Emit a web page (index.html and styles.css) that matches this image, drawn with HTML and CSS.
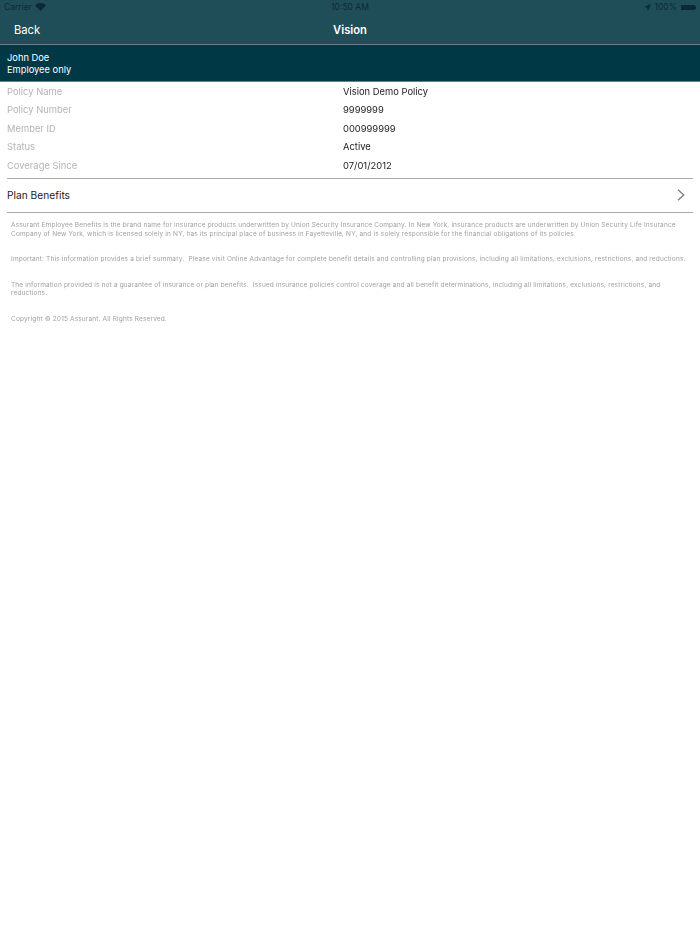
FILE: index.html
```html
<!DOCTYPE html>
<html lang="en">
<head>
    <meta charset="UTF-8">
    <meta name="viewport" content="width=device-width, initial-scale=1.0">
    <title>Vision</title>
    <link rel="stylesheet" href="styles.css">
</head>
<body>
    <div class="top-bar">
        <div class="status-bar">
            <div class="status-left">
                <span>Carrier</span>
                <svg class="wifi" width="11" height="8" viewBox="0 0 11 8"><path d="M5.5 8 L0 2.4 C3 -0.7 8 -0.7 11 2.4 Z" fill="#0c2a33"/></svg>
            </div>
            <div class="status-time">10:50 AM</div>
            <div class="status-right">
                <svg class="arrow" width="7" height="7" viewBox="0 0 7 7"><path d="M7 0 L0 3 L3.2 3.8 L4 7 Z" fill="#0c2a33"/></svg>
                <span>100%</span>
                <span class="battery"></span>
                <span class="battery-tip"></span>
            </div>
        </div>
        <div class="nav-bar">
            <div class="back">Back</div>
            <div class="nav-title">Vision</div>
        </div>
    </div>

    <div class="member">
        <div>John Doe</div>
        <div>Employee only</div>
    </div>

    <div class="details">
        <div class="row"><span class="label">Policy Name</span><span class="value">Vision Demo Policy</span></div>
        <div class="row"><span class="label">Policy Number</span><span class="value">9999999</span></div>
        <div class="row"><span class="label">Member ID</span><span class="value">000999999</span></div>
        <div class="row"><span class="label">Status</span><span class="value">Active</span></div>
        <div class="row"><span class="label">Coverage Since</span><span class="value">07/01/2012</span></div>
    </div>

    <div class="benefits">
        <span>Plan Benefits</span>
        <svg width="8" height="12" viewBox="0 0 8 12"><path d="M1 0.7 L6.8 6 L1 11.3" fill="none" stroke="#777" stroke-width="1.2"/></svg>
    </div>

    <div class="legal">
        <p>Assurant Employee Benefits is the brand name for insurance products underwritten by Union Security Insurance Company. In New York, insurance products are underwritten by Union Security Life Insurance Company of New York, which is licensed solely in NY, has its principal place of business in Fayetteville, NY, and is solely responsible for the financial obligations of its policies.</p>
        <p>Important: This information provides a brief summary.&nbsp; Please visit Online Advantage for complete benefit details and controlling plan provisions, including all limitations, exclusions, restrictions, and reductions.</p>
        <p>The information provided is not a guarantee of insurance or plan benefits.&nbsp; Issued insurance policies control coverage and all benefit determinations, including all limitations, exclusions, restrictions, and reductions.</p>
        <p>Copyright © 2015 Assurant. All Rights Reserved.</p>
    </div>
</body>
</html>
```

FILE: styles.css
```css
body {
    margin: 0;
    background: #fff;
    font-family: Inter, "Liberation Sans", sans-serif;
    color: #222;
}
.top-bar {
    height: 44px;
    background: #204e58;
    border-bottom: 1px solid #6b7f84;
}
.status-bar {
    height: 14px;
    display: flex;
    justify-content: space-between;
    align-items: center;
    padding: 0 4px;
    font-size: 8.5px;
    color: #0c2a33;
    position: relative;
}
.status-left, .status-right {
    display: flex;
    align-items: center;
    gap: 3px;
}
.status-time {
    position: absolute;
    left: 0;
    right: 0;
    text-align: center;
}
.battery {
    width: 14px;
    height: 5px;
    background: #0c2a33;
    margin-left: 1px;
}
.battery-tip {
    width: 1px;
    height: 3px;
    background: #0c2a33;
    margin-left: -3px;
}
.nav-bar {
    height: 29px;
    padding-top: 1px;
    display: flex;
    align-items: center;
    position: relative;
    color: #fff;
    font-size: 11.2px;
}
.back {
    margin-left: 14px;
}
.nav-title {
    position: absolute;
    left: 0;
    right: 0;
    text-align: center;
    font-weight: 600;
}
.member {
    height: 34px;
    padding-top: 2px;
    background: #003945;
    border-bottom: 1px solid #6b7f84;
    padding-left: 7px;
    color: #fff;
    font-size: 9.3px;
    line-height: 12px;
    display: flex;
    flex-direction: column;
    justify-content: center;
}
.details {
    margin: 0 7px;
    border-bottom: 1px solid #aaa;
    height: 96px;
}
.row {
    height: 18.5px;
    display: flex;
    align-items: center;
    font-size: 9.4px;
}
.label {
    width: 336px;
    color: #b4b4b4;
    filter: blur(0.3px);
}
.value {
    color: #222;
    filter: blur(0.3px);
}
.benefits {
    margin: 0 7px;
    height: 31px;
    padding-bottom: 2px;
    border-bottom: 1px solid #aaa;
    display: flex;
    justify-content: space-between;
    align-items: center;
    font-size: 10.2px;
    padding-right: 8px;
}
.legal {
    padding: 8px 7px 0 11px;
    font-size: 6.5px;
    letter-spacing: 0.16px;
    line-height: 8.7px;
    color: #a0a0a0;
    filter: blur(0.3px);
}
.legal p {
    margin: 0 0 16.8px;
}
```
